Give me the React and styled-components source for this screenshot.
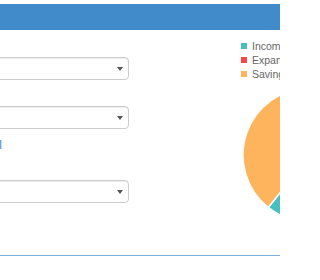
import React from "react";
import styled, { createGlobalStyle } from "styled-components";

const Global = createGlobalStyle`
  html, body { margin: 0; padding: 0; background: #fff; overflow: hidden; }
  body { font-family: "Liberation Sans", Arial, sans-serif; font-size: 14px; color: #333; }
`;

const Page = styled.div`
  width: 280px;
  height: 280px;
  overflow: hidden;
  padding-top: 4px;
  box-sizing: border-box;
`;

const Panel = styled.div`
  margin-left: -200px;
  width: 800px;
  border-bottom: 1px solid #80b0dd;
  background: #fff;
`;

const Heading = styled.div`
  height: 26px;
  background: #428bca;
  color: #fff;
`;

const Body = styled.div`
  display: flex;
  align-items: flex-start;
  padding: 7px 0 30px 29px;
`;

const LeftCol = styled.div`
  flex: 0 0 300px;
  display: flex;
  flex-direction: column;
`;

const FormGroup = styled.div`
  display: flex;
  flex-direction: column;
  margin-bottom: ${(p) => p.$mb || 0}px;
`;

const Label = styled.label`
  height: 20px;
  line-height: 20px;
  font-weight: bold;
  font-size: 13px;
`;

const SelectBox = styled.div`
  height: 23px;
  box-sizing: border-box;
  border: 1px solid #ccc;
  border-radius: 4px;
  box-shadow: inset 0 1px 1px rgba(0, 0, 0, 0.075);
  background: #fff;
  display: flex;
  align-items: center;
  justify-content: flex-end;
  padding-right: 5px;
`;

const LinkRow = styled.div`
  margin: 8px 0 6px;
  height: 17px;
  display: flex;
  justify-content: flex-end;
  width: 173px;
`;

const Link = styled.a`
  color: #428bca;
  font-size: 12px;
  line-height: 17px;
  text-decoration: none;
`;

const RightCol = styled.div`
  margin-left: 111px;
  display: flex;
  flex-direction: column;
  padding-top: 2px;
`;

const Legend = styled.ul`
  list-style: none;
  margin: 0;
  padding: 0 0 0 1px;
  display: flex;
  flex-direction: column;
`;

const LegendItem = styled.li`
  height: 14px;
  display: flex;
  align-items: center;
  gap: 5px;
  font-size: 10.5px;
  color: #666;
  white-space: nowrap;
`;

const Swatch = styled.span`
  width: 6px;
  height: 6px;
  background: ${(p) => p.$color};
  flex: none;
`;

const PieSvg = styled.svg`
  display: block;
  margin-top: 4px;
`;

const Caret = () => (
  <svg width="6" height="4" viewBox="0 0 6 4">
    <path d="M0 0 H6 L3 4 Z" fill="#555" />
  </svg>
);

function Select() {
  return (
    <SelectBox>
      <Caret />
    </SelectBox>
  );
}

const data = [
  { label: "Income", value: 60.7, color: "#46BFBD" },
  { label: "Expanse", value: 0, color: "#F7464A" },
  { label: "Saving", value: 39.3, color: "#FDB45C" },
];

function Pie() {
  const cx = 70, cy = 70, r = 67;
  const total = data.reduce((s, d) => s + d.value, 0);
  let a = -Math.PI / 2;
  const paths = data
    .filter((d) => d.value > 0)
    .map((d) => {
      const sweep = (d.value / total) * Math.PI * 2;
      const a2 = a + sweep;
      const x1 = cx + r * Math.cos(a), y1 = cy + r * Math.sin(a);
      const x2 = cx + r * Math.cos(a2), y2 = cy + r * Math.sin(a2);
      const large = sweep > Math.PI ? 1 : 0;
      a = a2;
      return (
        <path
          key={d.label}
          d={`M${cx} ${cy} L${x1} ${y1} A${r} ${r} 0 ${large} 1 ${x2} ${y2} Z`}
          fill={d.color}
          stroke="#fff"
          strokeWidth="1.5"
        />
      );
    });
  return (
    <PieSvg width="140" height="140" viewBox="0 0 140 140">
      {paths}
    </PieSvg>
  );
}

export default function App() {
  return (
    <Page>
      <Global />
      <Panel>
        <Heading />
        <Body>
          <LeftCol>
            <FormGroup $mb={6}>
              <Label>Month</Label>
              <Select />
            </FormGroup>
            <FormGroup>
              <Label>Category</Label>
              <Select />
            </FormGroup>
            <LinkRow>
              <Link href="#">Add detail</Link>
            </LinkRow>
            <FormGroup>
              <Label>Type</Label>
              <Select />
            </FormGroup>
          </LeftCol>
          <RightCol>
            <Legend>
              {data.map((d) => (
                <LegendItem key={d.label}>
                  <Swatch $color={d.color} />
                  {d.label}
                </LegendItem>
              ))}
            </Legend>
            <Pie />
          </RightCol>
        </Body>
      </Panel>
    </Page>
  );
}
